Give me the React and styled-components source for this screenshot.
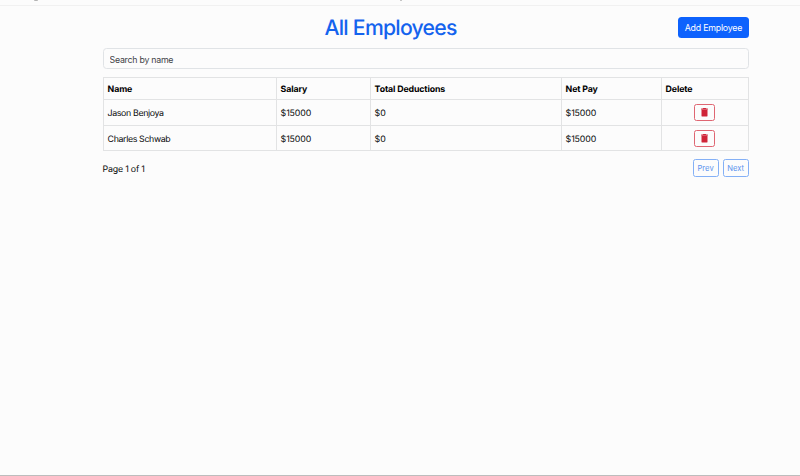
import React from "react";
import styled, { createGlobalStyle } from "styled-components";

const GlobalStyle = createGlobalStyle`
  *, *::before, *::after { box-sizing: border-box; }
  body {
    margin: 0;
    background: #fcfcfc;
    color: #08090a;
    font-family: Inter, "Liberation Sans", sans-serif;
    font-size: 8.8px;
    line-height: 13px;
    text-rendering: geometricPrecision;
  }
`;

const Page = styled.div`
  height: 476px;
  display: flex;
  flex-direction: column;
  overflow: hidden;
  border-bottom: 1px solid #bdbdbd;
`;

const NavEdge = styled.div`
  height: 6px;
  flex: none;
  display: flex;
  align-items: flex-start;
  gap: 362px;
  padding-left: 34px;
  border-bottom: 1px solid #f1f1f1;
`;

const Descender = styled.span`
  width: ${(p) => p.$width}px;
  height: 1px;
  background: #b4b4b4;
  border-radius: 0 0 2px 2px;
`;

const Container = styled.main`
  width: 646px;
  margin: 10px 0 0 102.6px;
`;

const Header = styled.header`
  display: grid;
  grid-template-columns: 1fr auto 1fr;
  align-items: start;
  height: 22px;
  margin-bottom: 10px;
`;

const Title = styled.h1`
  grid-column: 2;
  margin: 0;
  transform: translateX(-35px);
  color: #1463ee;
  font-size: 21.2px;
  line-height: 24px;
  font-weight: 500;
  letter-spacing: -0.74px;
  white-space: nowrap;
`;

const AddButton = styled.button`
  justify-self: end;
  width: 70.4px;
  height: 21px;
  margin-top: 0.5px;
  padding: 0;
  border: 0;
  border-radius: 3.5px;
  background: #0d62fd;
  color: #fff;
  font: 400 8.8px/21px Inter, sans-serif;
  letter-spacing: -0.22px;
  white-space: nowrap;
`;

const Search = styled.input`
  display: block;
  width: 100%;
  height: 21px;
  margin-bottom: 8px;
  padding: 1px 6px 0;
  border: 1px solid #e0e3e6;
  border-radius: 3.5px;
  background: #fcfcfc;
  font: 400 8.8px/13px Inter, sans-serif;
  letter-spacing: -0.26px;
  outline: none;
  &::placeholder { color: #3f4347; opacity: 1; }
`;

const Table = styled.table`
  width: 100%;
  table-layout: fixed;
  border-spacing: 0;
  border: solid #e2e3e4;
  border-width: 1px 0 0 1px;
`;

const cellBorder = "solid #e2e3e4";

const HeadCell = styled.th`
  height: 22px;
  padding: 2px 4px 0;
  border: ${cellBorder};
  border-width: 0 1px 1px 0;
  color: #000;
  font-weight: 700;
  text-align: left;
  letter-spacing: -0.13px;
`;

const Cell = styled.td`
  height: ${(p) => p.$height}px;
  padding: 0 4px;
  border: ${cellBorder};
  border-width: 0 1px 1px 0;
  text-align: left;
  vertical-align: middle;
  letter-spacing: ${(p) => (p.$name ? -0.36 : -0.12)}px;
`;

const CellText = styled.div`
  padding-top: 2px;
`;

const DeleteButton = styled.button`
  display: flex;
  align-items: center;
  justify-content: center;
  width: 21px;
  height: 17px;
  margin: 0 auto;
  padding: 0;
  border: 1px solid #df6672;
  border-radius: 2.5px;
  background: transparent;
  color: #cf2438;
`;

const Footer = styled.footer`
  display: flex;
  align-items: center;
  justify-content: space-between;
  margin-top: 8px;
  letter-spacing: -0.2px;
`;

const PageStatus = styled.span`
  padding-top: 2px;
`;

const Pager = styled.div`
  display: flex;
  gap: 4px;
`;

const PageButton = styled.button`
  width: 26px;
  height: 18px;
  padding: 1px 0 0;
  border: 1px solid #84b0f6;
  border-radius: 2.5px;
  background: transparent;
  color: #5c94ee;
  font: 400 7.6px/15px Inter, sans-serif;
`;

const TrashIcon = () => (
  <svg width="7" height="9" viewBox="0 0 7 9" fill="currentColor" aria-hidden="true">
    <path d="M2.3 0h2.4l.5.5h1.6v1.2H.2V.5h1.6zM.5 2h6v5.7c0 .5-.4.9-.9.9H1.4c-.5 0-.9-.4-.9-.9z" />
  </svg>
);

const columns = [
  ["Name", 173],
  ["Salary", 94],
  ["Total Deductions", 191],
  ["Net Pay", 100],
  ["Delete", 87],
];

const employees = [
  { name: "Jason Benjoya", salary: 15000, deductions: 0, height: 26 },
  { name: "Charles Schwab", salary: 15000, deductions: 0, height: 25 },
];

const Column = styled.col`
  width: ${(p) => p.$width}px;
`;

export default function App() {
  return (
    <>
      <GlobalStyle />
      <Page>
        <NavEdge>
          <Descender $width={4} />
          <Descender $width={2} />
        </NavEdge>
        <Container>
          <Header>
            <Title>All Employees</Title>
            <AddButton>Add Employee</AddButton>
          </Header>
          <Search placeholder="Search by name" />
          <Table>
            <colgroup>
              {columns.map(([label, width]) => (
                <Column key={label} $width={width} />
              ))}
            </colgroup>
            <thead>
              <tr>
                {columns.map(([label]) => (
                  <HeadCell key={label}>{label}</HeadCell>
                ))}
              </tr>
            </thead>
            <tbody>
              {employees.map((e) => (
                <tr key={e.name}>
                  <Cell $height={e.height} $name><CellText>{e.name}</CellText></Cell>
                  <Cell $height={e.height}><CellText>${e.salary}</CellText></Cell>
                  <Cell $height={e.height}><CellText>${e.deductions}</CellText></Cell>
                  <Cell $height={e.height}><CellText>${e.salary - e.deductions}</CellText></Cell>
                  <Cell $height={e.height}>
                    <DeleteButton aria-label="Delete">
                      <TrashIcon />
                    </DeleteButton>
                  </Cell>
                </tr>
              ))}
            </tbody>
          </Table>
          <Footer>
            <PageStatus>Page 1 of 1</PageStatus>
            <Pager>
              <PageButton disabled>Prev</PageButton>
              <PageButton disabled>Next</PageButton>
            </Pager>
          </Footer>
        </Container>
      </Page>
    </>
  );
}
